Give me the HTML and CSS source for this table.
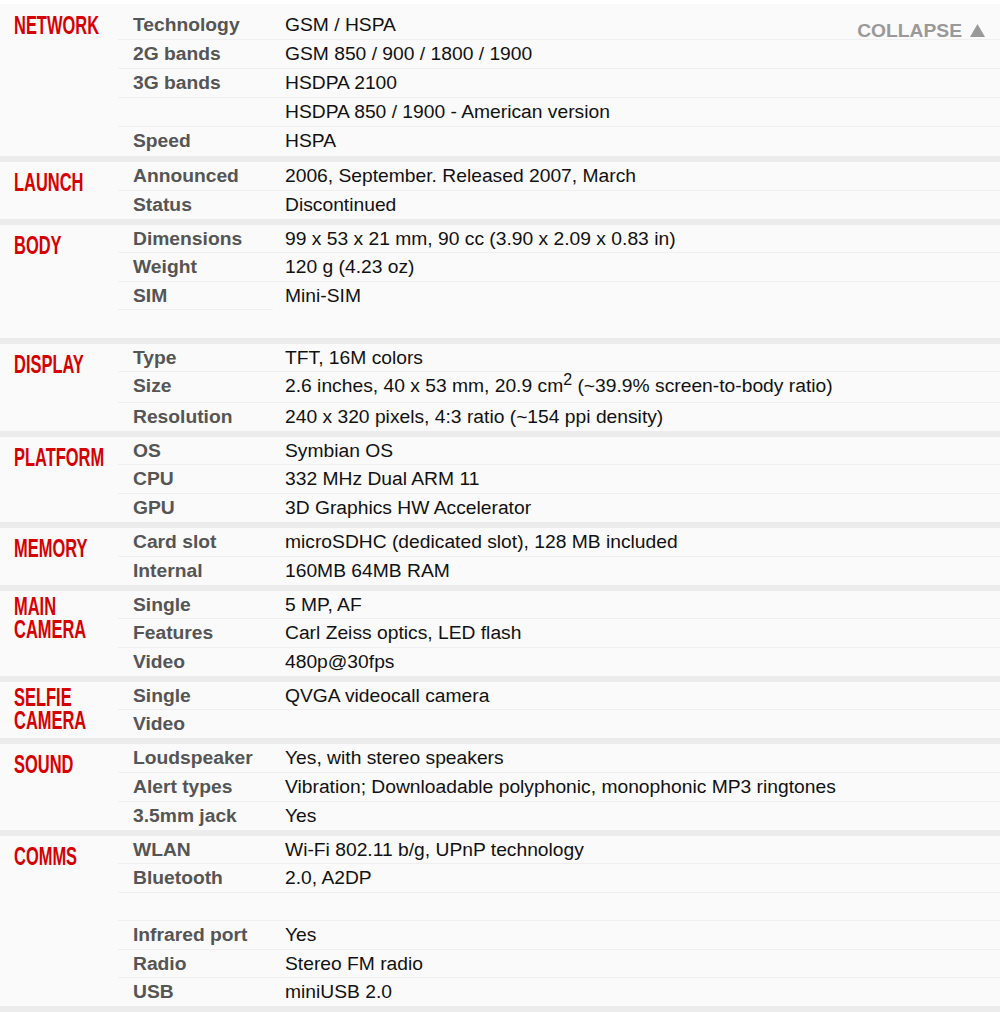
FILE: index.html
```html
<!DOCTYPE html>
<html>
<head>
<meta charset="utf-8">
<link rel="stylesheet" href="styles.css">
</head>
<body>
<div class="specs">

  <section class="sec first">
    <div class="hd"><span class="hdt">NETWORK</span></div>
    <div class="rows">
      <div class="row big"><div class="ttl">Technology</div><div class="nfo">GSM / HSPA</div></div>
      <div class="row big"><div class="ttl">2G bands</div><div class="nfo">GSM 850 / 900 / 1800 / 1900</div></div>
      <div class="row big"><div class="ttl">3G bands</div><div class="nfo">HSDPA 2100</div></div>
      <div class="row big"><div class="ttl"></div><div class="nfo">HSDPA 850 / 1900 - American version</div></div>
      <div class="row big"><div class="ttl">Speed</div><div class="nfo">HSPA</div></div>
    </div>
    <a class="collapse">COLLAPSE<svg class="tri" width="15" height="13" viewBox="0 0 15 13"><polygon points="7.5,0 15,13 0,13" fill="#999"/></svg></a>
  </section>

  <section class="sec">
    <div class="hd"><span class="hdt">LAUNCH</span></div>
    <div class="rows">
      <div class="row"><div class="ttl">Announced</div><div class="nfo">2006, September. Released 2007, March</div></div>
      <div class="row"><div class="ttl">Status</div><div class="nfo">Discontinued</div></div>
    </div>
  </section>

  <section class="sec">
    <div class="hd"><span class="hdt">BODY</span></div>
    <div class="rows">
      <div class="row"><div class="ttl">Dimensions</div><div class="nfo">99 x 53 x 21 mm, 90 cc (3.90 x 2.09 x 0.83 in)</div></div>
      <div class="row"><div class="ttl">Weight</div><div class="nfo">120 g (4.23 oz)</div></div>
      <div class="row"><div class="ttl">SIM</div><div class="nfo">Mini-SIM</div></div>
      <div class="row blank half"><div class="ttl"></div><div class="nfo"></div></div>
    </div>
  </section>

  <section class="sec">
    <div class="hd"><span class="hdt">DISPLAY</span></div>
    <div class="rows">
      <div class="row"><div class="ttl">Type</div><div class="nfo">TFT, 16M colors</div></div>
      <div class="row tall"><div class="ttl">Size</div><div class="nfo">2.6 inches, 40 x 53 mm, 20.9 cm<sup>2</sup> (~39.9% screen-to-body ratio)</div></div>
      <div class="row"><div class="ttl">Resolution</div><div class="nfo">240 x 320 pixels, 4:3 ratio (~154 ppi density)</div></div>
    </div>
  </section>

  <section class="sec">
    <div class="hd"><span class="hdt">PLATFORM</span></div>
    <div class="rows">
      <div class="row"><div class="ttl">OS</div><div class="nfo">Symbian OS</div></div>
      <div class="row"><div class="ttl">CPU</div><div class="nfo">332 MHz Dual ARM 11</div></div>
      <div class="row"><div class="ttl">GPU</div><div class="nfo">3D Graphics HW Accelerator</div></div>
    </div>
  </section>

  <section class="sec">
    <div class="hd"><span class="hdt">MEMORY</span></div>
    <div class="rows">
      <div class="row"><div class="ttl">Card slot</div><div class="nfo">microSDHC (dedicated slot), 128 MB included</div></div>
      <div class="row"><div class="ttl">Internal</div><div class="nfo">160MB 64MB RAM</div></div>
    </div>
  </section>

  <section class="sec">
    <div class="hd two"><span class="hdt">MAIN</span><span class="hdt">CAMERA</span></div>
    <div class="rows">
      <div class="row"><div class="ttl">Single</div><div class="nfo">5 MP, AF</div></div>
      <div class="row"><div class="ttl">Features</div><div class="nfo">Carl Zeiss optics, LED flash</div></div>
      <div class="row"><div class="ttl">Video</div><div class="nfo">480p@30fps</div></div>
    </div>
  </section>

  <section class="sec">
    <div class="hd two"><span class="hdt">SELFIE</span><span class="hdt">CAMERA</span></div>
    <div class="rows">
      <div class="row"><div class="ttl">Single</div><div class="nfo">QVGA videocall camera</div></div>
      <div class="row"><div class="ttl">Video</div><div class="nfo"></div></div>
    </div>
  </section>

  <section class="sec">
    <div class="hd"><span class="hdt">SOUND</span></div>
    <div class="rows">
      <div class="row"><div class="ttl">Loudspeaker</div><div class="nfo">Yes, with stereo speakers</div></div>
      <div class="row"><div class="ttl">Alert types</div><div class="nfo">Vibration; Downloadable polyphonic, monophonic MP3 ringtones</div></div>
      <div class="row"><div class="ttl">3.5mm jack</div><div class="nfo">Yes</div></div>
    </div>
  </section>

  <section class="sec last">
    <div class="hd"><span class="hdt">COMMS</span></div>
    <div class="rows">
      <div class="row"><div class="ttl">WLAN</div><div class="nfo">Wi-Fi 802.11 b/g, UPnP technology</div></div>
      <div class="row"><div class="ttl">Bluetooth</div><div class="nfo">2.0, A2DP</div></div>
      <div class="row blank"><div class="ttl"></div><div class="nfo"></div></div>
      <div class="row"><div class="ttl">Infrared port</div><div class="nfo">Yes</div></div>
      <div class="row"><div class="ttl">Radio</div><div class="nfo">Stereo FM radio</div></div>
      <div class="row"><div class="ttl">USB</div><div class="nfo">miniUSB 2.0</div></div>
    </div>
  </section>

</div>
</body>
</html>
```

FILE: styles.css
```css
html, body {
  margin: 0;
  padding: 0;
  background: #ffffff;
}

body {
  font-family: "Liberation Sans", Arial, sans-serif;
  font-size: 19.25px;
  color: #111;
}

.specs {
  padding-top: 4px;
}

.sec {
  position: relative;
  display: flex;
  background: #fafafa;
  border-bottom: 6px solid #ececec;
  padding-bottom: 0.4px;
}

.sec.first {
  padding-top: 7px;
  padding-bottom: 1px;
}

.hd {
  width: 118px;
  flex: 0 0 118px;
  box-sizing: border-box;
  padding-left: 14px;
  padding-top: 9px;
  white-space: nowrap;
  display: flex;
  flex-direction: column;
  align-items: flex-start;
}

.sec.first .hd {
  padding-top: 3px;
}

.hd.two {
  padding-top: 4px;
}

.hdt {
  display: block;
  height: 23px;
  font-family: "Liberation Sans", Arial, sans-serif;
  font-weight: bold;
  font-size: 26px;
  line-height: 23px;
  color: #d50000;
  transform: scaleX(0.633);
  transform-origin: left top;
}

.rows {
  flex: 1;
  display: flex;
  flex-direction: column;
}

.row {
  display: flex;
  height: 27.6px;
  line-height: 27.6px;
}

.row.big {
  height: 28px;
  line-height: 28px;
}

.row + .row {
  border-top: 1px solid #efefef;
}

.row.half {
  border-top: none;
  height: 28px;
}

.row.half .ttl {
  border-top: 1px solid #efefef;
}

.row.tall {
  height: 29.5px;
}

.ttl {
  width: 155px;
  flex: 0 0 155px;
  box-sizing: border-box;
  padding-left: 15px;
  font-weight: bold;
  color: #555;
  white-space: nowrap;
}

.nfo {
  flex: 1;
  padding-left: 12px;
  color: #111;
  white-space: nowrap;
}

.nfo sup {
  font-size: 16px;
  line-height: 0;
  vertical-align: 7px;
}

.collapse {
  position: absolute;
  top: 17px;
  right: 15px;
  display: flex;
  align-items: center;
  font-weight: bold;
  font-size: 19.25px;
  line-height: 20px;
  color: #999;
  text-decoration: none;
}

.tri {
  display: block;
  margin-left: 8px;
  margin-top: -2px;
}
```
